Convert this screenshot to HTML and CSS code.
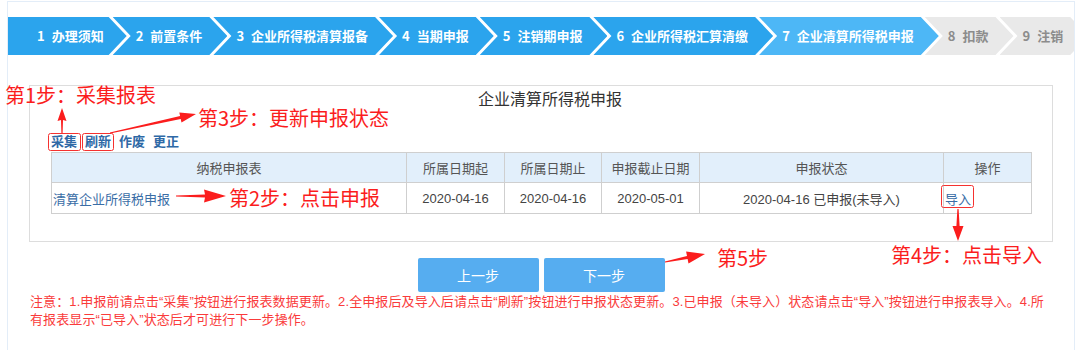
FILE: index.html
```html
<!DOCTYPE html>
<html>
<head>
    <meta charset="utf-8">
    <title>企业清算所得税申报</title>
    <link rel="stylesheet" href="styles.css">
</head>
<body>
    <div class="page">
        <ul class="steps">
            <li class="step first"><span class="num">1</span>办理须知</li>
            <li class="step"><span class="num">2</span>前置条件</li>
            <li class="step"><span class="num">3</span>企业所得税清算报备</li>
            <li class="step"><span class="num">4</span>当期申报</li>
            <li class="step"><span class="num">5</span>注销期申报</li>
            <li class="step"><span class="num">6</span>企业所得税汇算清缴</li>
            <li class="step current"><span class="num">7</span>企业清算所得税申报</li>
            <li class="step todo"><span class="num">8</span>扣款</li>
            <li class="step todo"><span class="num">9</span>注销</li>
        </ul>

        <div class="main-panel">
            <div class="panel-title">企业清算所得税申报</div>
            <div class="toolbar">
                <a href="#">采集</a><a href="#">刷新</a><a href="#">作废</a><a href="#">更正</a>
            </div>
            <table class="grid">
                <colgroup>
                    <col style="width:355px">
                    <col style="width:98px">
                    <col style="width:97px">
                    <col style="width:98px">
                    <col style="width:244px">
                    <col style="width:88px">
                </colgroup>
                <tr>
                    <th>纳税申报表</th>
                    <th>所属日期起</th>
                    <th>所属日期止</th>
                    <th>申报截止日期</th>
                    <th>申报状态</th>
                    <th>操作</th>
                </tr>
                <tr>
                    <td class="td-left"><a href="#">清算企业所得税申报</a></td>
                    <td>2020-04-16</td>
                    <td>2020-04-16</td>
                    <td>2020-05-01</td>
                    <td>2020-04-16 已申报(未导入)</td>
                    <td class="td-left td-op"><a href="#">导入</a></td>
                </tr>
            </table>
        </div>

        <div class="actions">
            <button type="button">上一步</button>
            <button type="button">下一步</button>
        </div>

        <div class="notice">注意：1.申报前请点击“采集”按钮进行报表数据更新。2.全申报后及导入后请点击“刷新”按钮进行申报状态更新。3.已申报（未导入）状态请点击“导入”按钮进行申报表导入。4.所有报表显示“已导入”状态后才可进行下一步操作。</div>
    </div>

    <!-- hand-drawn hints over the screenshot -->
    <div class="notes">
        <svg width="1080" height="350" viewBox="0 0 1080 350">
            <g fill="none" stroke="#f5312f" stroke-width="1">
                <rect x="48.5" y="133.5" width="32" height="17" rx="2"/>
                <rect x="82.5" y="133.5" width="31" height="17" rx="2"/>
                <rect x="941.5" y="185.5" width="32" height="22" rx="2"/>
            </g>
            <g fill="#fb1d1d">
                <polygon points="62,108 66.5,121 63,120 62.6,133 61.4,133 61,120 57.5,121"/>
                <polygon points="109.9,132.5 180.1,116 179.3,112.6 196,114 181.5,122.4 180.7,118.9 110.1,133.5"/>
                <polygon points="176,195.4 205,194.4 204,189.5 226,196 204,202.5 205,197.6 176,196.6"/>
                <polygon points="957.4,209 958.6,209 959.6,226 963.5,226 958,241 952.5,226 956.4,226"/>
                <polygon points="664.9,261.4 687,256 686.1,251.6 705,254 688.5,263.4 687.6,259 665.1,262.6"/>
            </g>
        </svg>
        <div class="note note-1">第1步：采集报表</div>
        <div class="note note-3">第3步：更新申报状态</div>
        <div class="note note-2">第2步：点击申报</div>
        <div class="note note-4">第4步：点击导入</div>
        <div class="note note-5">第5步</div>
    </div>
</body>
</html>
```

FILE: styles.css
```css
html {
    height: 100%;
}

body {
    position: relative;
    height: 100%;
    margin: 0;
    padding: 0;
    overflow: hidden;
    background: #ffffff;
    font-family: 'Liberation Sans', 'Noto Sans CJK SC', sans-serif;
    font-size: 13px;
    color: #333333;
}

a {
    text-decoration: none;
}

.page {
    width: 1066px;
    min-height: 349px;
    margin: 1px 0 0 7px;
    border: 1px solid #e3edf8;
    border-bottom: none;
    overflow: hidden;
}

/* step bar */
.steps {
    display: flex;
    margin: 15px 0 0;
    padding: 0;
    list-style: none;
    white-space: nowrap;
}

.step {
    flex: none;
    height: 38px;
    line-height: 38px;
    padding: 0 25px 0 23px;
    margin-left: -14px;
    background: #2ba4ed;
    color: #ffffff;
    font-family: 'Noto Sans CJK SC', sans-serif;
    font-size: 13px;
    font-weight: bold;
    clip-path: polygon(0 0, calc(100% - 18px) 0, 100% 50%, calc(100% - 18px) 100%, 0 100%, 18px 50%);
}

.step.first {
    margin-left: 0;
    padding-left: 29px;
    padding-right: 23px;
    clip-path: polygon(0 0, calc(100% - 18px) 0, 100% 50%, calc(100% - 18px) 100%, 0 100%);
}

.step.current {
    background: #4db7f6;
}

.step.todo {
    background: #e9e9e9;
    color: #8c8c8c;
}

.step .num {
    margin-right: 7px;
}

/* panel */
.main-panel {
    box-sizing: border-box;
    width: 1024px;
    margin: 30px 0 0 21px;
    padding: 1px 21px 27px;
    border: 1px solid #dddddd;
}

.panel-title {
    height: 22px;
    line-height: 22px;
    padding-left: 18px;
    text-align: center;
    font-family: 'Noto Sans CJK SC', sans-serif;
    font-size: 16px;
    color: #333333;
}

.toolbar {
    height: 18px;
    line-height: 18px;
    margin: 24px 0 1px;
}

.toolbar a {
    margin-right: 8px;
    color: #2e69a6;
    font-weight: bold;
}

.grid {
    width: 100%;
    table-layout: fixed;
    border-collapse: collapse;
}

.grid th,
.grid td {
    border: 1px solid #cfcfcf;
    text-align: center;
    padding: 0;
}

.grid th {
    height: 29px;
    background: #e2effb;
    font-weight: normal;
    color: #555555;
}

.grid td {
    height: 30px;
    color: #444444;
}

.grid .td-left {
    text-align: left;
    padding-left: 1px;
}

.grid .td-op {
    padding-left: 1px;
}

.grid td a {
    color: #3a6da6;
}

/* buttons */
.actions {
    display: flex;
    justify-content: center;
    gap: 5px;
    width: 1024px;
    margin: 16px 0 0 21px;
}

.actions button {
    width: 121px;
    height: 34px;
    border: none;
    border-radius: 2px;
    background: #56adf0;
    color: #ffffff;
    font-family: 'Noto Sans CJK SC', sans-serif;
    font-size: 14px;
}

.notice {
    width: 1020px;
    margin: 1px 0 0 22px;
    line-height: 18px;
    font-size: 13px;
    letter-spacing: 0.1px;
    color: #fa3b3b;
}

/* hints */
.notes {
    position: absolute;
    left: 0;
    top: 0;
    width: 1080px;
    height: 350px;
    pointer-events: none;
}

.notes svg {
    position: absolute;
    left: 0;
    top: 0;
}

.note {
    position: absolute;
    line-height: 22px;
    white-space: nowrap;
    font-family: 'Noto Sans CJK SC', sans-serif;
    font-size: 20px;
    color: #fb1d1d;
}

.note-1 { left: 5px; top: 84px; }
.note-3 { left: 198px; top: 107px; }
.note-2 { left: 229px; top: 187px; }
.note-4 { left: 891px; top: 244px; }
.note-5 { left: 717px; top: 247px; }
```
